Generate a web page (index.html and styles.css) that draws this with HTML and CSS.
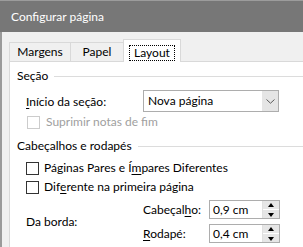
FILE: index.html
```html
<!DOCTYPE html>
<html lang="pt">
<head>
<meta charset="utf-8">
<title>Configurar página</title>
<link rel="stylesheet" href="styles.css">
</head>
<body>
<div class="dialog">
  <div class="titlebar">Configurar página</div>
  <div class="content">
    <div class="tabs">
      <div class="tab tab-first">Margens</div>
      <div class="tab">Papel</div>
      <div class="tab tab-active"><span class="focus">Layout</span></div>
    </div>
    <div class="panel">
      <div class="group-head"><span>Seção</span><i class="rule"></i></div>
      <div class="row row-start">
        <span class="label-start"><u>I</u>nício da seção:</span>
        <div class="select">
          <span class="select-text">Nova página</span>
          <span class="select-btn">
            <svg width="9" height="5" viewBox="0 0 9 5"><path d="M0.5 0.5 L4.5 4.2 L8.5 0.5" fill="none" stroke="#5a5a5a" stroke-width="1"/></svg>
          </span>
        </div>
      </div>
      <div class="check check-disabled"><span class="box"></span>Suprimir notas de fim</div>
      <div class="group-head group-second"><span>Cabeçalhos e rodapés</span><i class="rule"></i></div>
      <div class="check check-1"><span class="box"></span>Páginas Pares e Í<u>m</u>pares Diferentes</div>
      <div class="check check-2"><span class="box"></span>Dif<u>e</u>rente na primeira página</div>
      <div class="border-row">
        <div class="label-border">Da borda:</div>
        <div class="spins">
          <div class="spin-row">
            <span class="spin-label">Cabeçal<u>h</u>o:</span>
            <div class="spin"><span class="spin-text">0,9 cm</span><span class="spin-btns"><span class="up"></span><span class="down"></span></span></div>
          </div>
          <div class="spin-row">
            <span class="spin-label"><u>R</u>odapé:</span>
            <div class="spin"><span class="spin-text">0,4 cm</span><span class="spin-btns"><span class="up"></span><span class="down"></span></span></div>
          </div>
        </div>
      </div>
    </div>
  </div>
</div>
</body>
</html>
```
FILE: styles.css
```css
html, body {
  margin: 0;
  padding: 0;
  width: 303px;
  height: 247px;
  overflow: hidden;
  background: #f0f0f0;
}
.dialog {
  font-family: "Lato", "Segoe UI", sans-serif;
  font-size: 12px;
  color: #000;
  width: 303px;
  height: 247px;
  overflow: hidden;
}
.titlebar {
  height: 31px;
  border-top: 1px solid #9c9c9c;
  background: #777777;
  color: #ffffff;
  line-height: 31px;
  padding-left: 11px;
  font-size: 12px;
}
.content {
  border-left: 2px solid #9a9a9a;
  padding-left: 7px;
  height: 215px;
  display: flex;
  flex-direction: column;
}
.tabs {
  display: flex;
  align-items: flex-end;
  height: 29px;
  position: relative;
  z-index: 1;
}
.tab {
  box-sizing: border-box;
  height: 19px;
  border: 1px solid #d9d9d9;
  border-bottom: none;
  background: #f0f0f0;
  line-height: 17px;
  text-align: center;
  margin-left: -1px;
  width: 54px;
}
.tab-first {
  margin-left: 0;
  width: 62px;
}
.tab-active {
  height: 23px;
  width: 58px;
  margin-bottom: -1px;
  background: #ffffff;
  padding-top: 4px;
}
.focus {
  display: inline-block;
  box-sizing: border-box;
  height: 16px;
  width: 46px;
  line-height: 14px;
  border: 1px dotted #000;
}
.panel {
  flex: 1;
  background: #ffffff;
  border-top: 1px solid #d9d9d9;
  border-left: 1px solid #d9d9d9;
  padding: 6px 0 0 7px;
}
.group-head {
  display: flex;
  align-items: center;
  height: 16px;
  line-height: 16px;
}
.group-head .rule {
  flex: 1;
  height: 1px;
  background: #dcdcdc;
  margin-left: 6px;
}
.group-second {
  margin-top: 8px;
}
.row-start {
  display: flex;
  align-items: center;
  margin-top: 6px;
  padding-left: 9px;
}
.label-start {
  width: 117px;
}
.select {
  box-sizing: border-box;
  width: 136px;
  height: 22px;
  border: 1px solid #adadad;
  display: flex;
  align-items: stretch;
}
.select-text {
  flex: 1;
  line-height: 20px;
  padding-left: 4px;
}
.select-btn {
  width: 16px;
  background: #e5e5e5;
  display: flex;
  align-items: center;
  justify-content: center;
}
.check {
  display: flex;
  align-items: center;
  height: 16px;
  line-height: 16px;
  padding-left: 10px;
}
.check .box {
  box-sizing: border-box;
  width: 13px;
  height: 13px;
  border: 1px solid #333333;
  margin-right: 5px;
  background: #fff;
}
.check-disabled {
  margin-top: 2px;
  color: #a0a0a0;
}
.check-disabled .box {
  border-color: #cccccc;
  margin-right: 6px;
}
.check-1 {
  margin-top: 6px;
  padding-left: 9px;
}
.check-2 {
  margin-top: 3px;
  padding-left: 9px;
}
.border-row {
  display: flex;
  align-items: center;
  margin-top: 5px;
  padding-left: 9px;
}
.label-border {
  width: 117px;
}
.spins {
  display: flex;
  flex-direction: column;
  gap: 5px;
}
.spin-row {
  display: flex;
  align-items: center;
}
.spin-label {
  width: 66px;
}
.spin {
  box-sizing: border-box;
  width: 71px;
  height: 19px;
  border: 1px solid #adadad;
  display: flex;
}
.spin-text {
  flex: 1;
  line-height: 17px;
  padding-left: 3px;
}
.spin-btns {
  width: 16px;
  display: flex;
  flex-direction: column;
  border-left: 1px solid #e0e0e0;
}
.spin-btns span {
  flex: 1;
  background: #e6e6e6;
  position: relative;
}
.spin-btns .up {
  border-bottom: 1px solid #ffffff;
}
.spin-btns .up::after,
.spin-btns .down::after {
  content: "";
  position: absolute;
  left: 5px;
  width: 0;
  height: 0;
  border-left: 3px solid transparent;
  border-right: 3px solid transparent;
}
.spin-btns .up::after {
  top: 2px;
  border-bottom: 4px solid #000;
}
.spin-btns .down::after {
  top: 3px;
  border-top: 4px solid #000;
}
u {
  text-decoration: underline;
  text-underline-offset: 2px;
}
```
